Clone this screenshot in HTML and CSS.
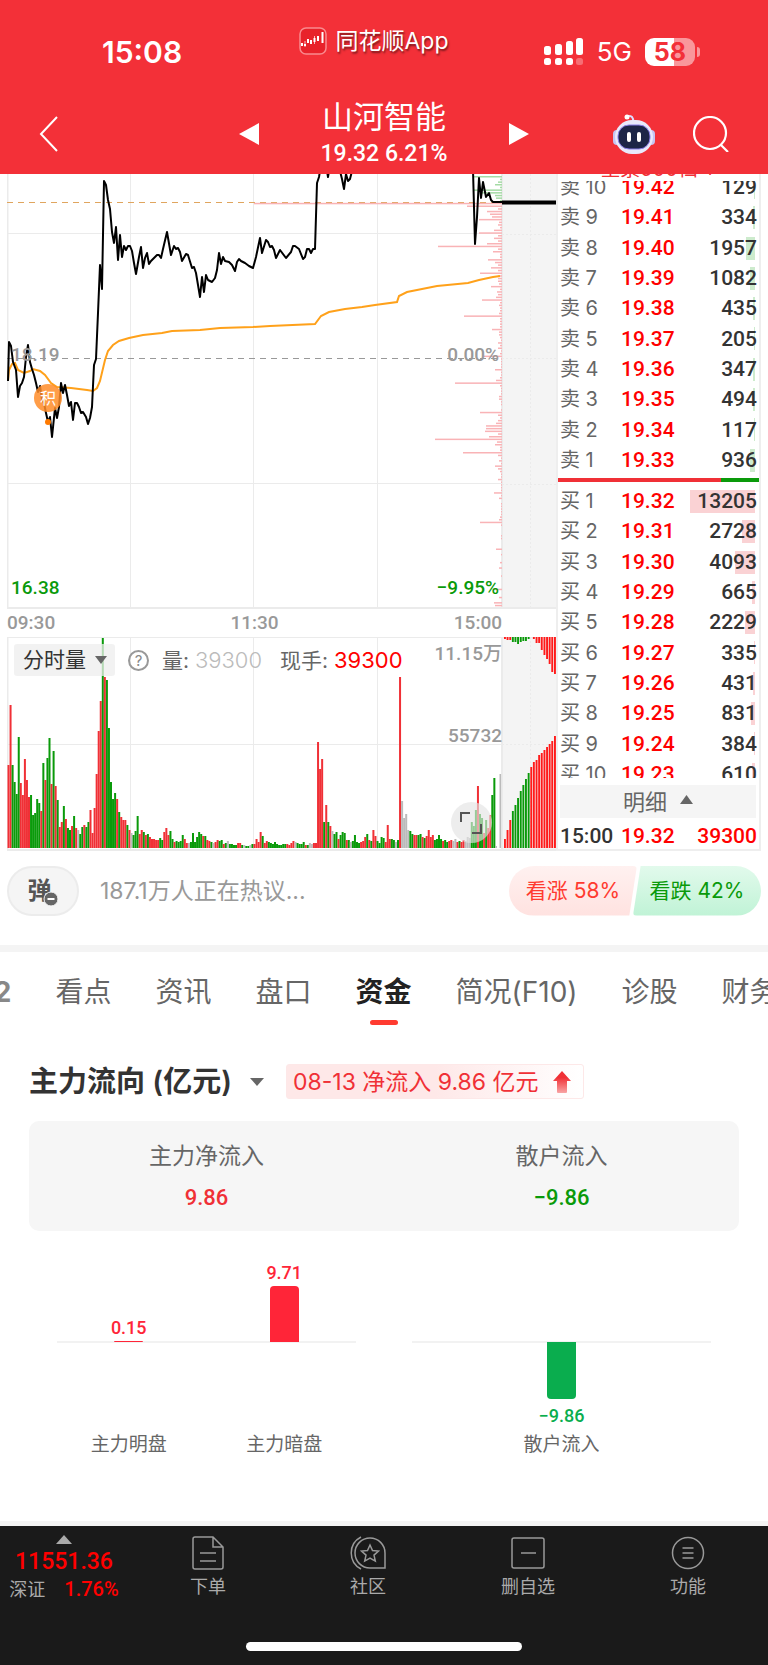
FILE: index.html
```
<!DOCTYPE html>
<html lang="zh-CN">
<head>
    <meta charset="UTF-8">
    <meta name="viewport" content="width=device-width, initial-scale=1">
    <title>山河智能</title>
    <link rel="stylesheet" href="styles.css">
</head>
<body>
    <header class="header">
        <div class="status-bar">
            <div class="status-time">15:08</div>
            <div class="brand">
                <svg width="28" height="28" viewBox="0 0 28 28">
                    <rect x="1" y="1" width="26" height="26" rx="6" fill="#e8222a" stroke="#f98a8e" stroke-width="1.5"/>
                    <path d="M3 16v3M6 17v2M9 12v4M12 13v4M15.500 11v4M19 9v5M23.500 5v11" stroke="#fff" stroke-width="2"/>
                    <path d="M6 14v6M15.500 9v8" stroke="#fff" stroke-width=".7"/>
                </svg>
                <span>同花顺App</span>
            </div>
            <div class="status-right">
                <svg width="40" height="28" viewBox="0 0 40 28" fill="#fff">
                    <rect x="0" y="8" width="7" height="9" rx="2.500"/>
                    <rect x="11" y="6" width="7" height="11" rx="2.500"/>
                    <rect x="22" y="3" width="7" height="14" rx="2.500"/>
                    <rect x="32" y="0" width="7" height="17" rx="2.500"/>
                    <rect x="0" y="20" width="7" height="7" rx="2.500"/>
                    <rect x="11" y="20" width="7" height="7" rx="2.500"/>
                    <rect x="22" y="20" width="7" height="7" rx="2.500"/>
                    <rect x="32" y="20" width="7" height="7" rx="2.500" opacity=".3"/>
                </svg>
                <span class="network">5G</span>
                <span class="battery">58</span>
            </div>
        </div>
        <div class="title-bar">
            <button class="icon-btn" aria-label="返回">
                <svg width="20" height="36" viewBox="0 0 20 36"><path d="M18 1L2 18l16 17" fill="none" stroke="#fff" stroke-width="2"/></svg>
            </button>
            <div class="stock">
                <button class="icon-btn" aria-label="上一只">
                    <svg width="20" height="22" viewBox="0 0 20 22"><path d="M20 0v22L0 11z" fill="#fff"/></svg>
                </button>
                <div class="stock-name">
                    <h1>山河智能</h1>
                    <p>19.32 6.21%</p>
                </div>
                <button class="icon-btn" aria-label="下一只">
                    <svg width="20" height="22" viewBox="0 0 20 22"><path d="M0 0v22l20-11z" fill="#fff"/></svg>
                </button>
            </div>
            <div class="title-actions">
                <button class="icon-btn" aria-label="智能助手">
                    <svg width="44" height="42" viewBox="0 0 44 42">
                        <path d="M15 3q7-1 6 6" fill="none" stroke="#dcdcff" stroke-width="2"/>
                        <circle cx="15" cy="4" r="2.500" fill="#fff"/>
                        <rect x="1" y="17" width="8" height="15" rx="4" fill="#c5c4f2"/>
                        <rect x="35" y="17" width="8" height="15" rx="4" fill="#c5c4f2"/>
                        <rect x="3" y="7" width="38" height="34" rx="17" fill="#e9e9fb"/>
                        <rect x="6" y="12" width="32" height="24" rx="11" fill="#1d2547" stroke="#8b7fe8"/>
                        <path d="M17 21v6M27 21v6" stroke="#fff" stroke-width="4" stroke-linecap="round"/>
                    </svg>
                </button>
                <button class="icon-btn" aria-label="搜索">
                    <svg width="36" height="36" viewBox="0 0 36 36" fill="none" stroke="#fff" stroke-width="2.200"><circle cx="17" cy="17" r="16"/><path d="M28 29l7 7"/></svg>
                </button>
            </div>
        </div>
    </header>

    <main>
        <section class="quote">
            <div class="charts">
                <div class="price-chart">
                    <svg class="plot" viewBox="0 0 549 435" preserveAspectRatio="none">
                        <rect x="495" y="0" width="54" height="434" fill="#f4f4f4"/>
                        <g stroke="#ebebeb" stroke-width="1">
                            <path d="M123.500 0V434M246.500 0V434M370.500 0V434M0 59.500H495M0 309.500H495"/>
                            <path d="M.5 0V434M495 0V434M0 434H549" stroke-width="2"/>
                            <path d="M495 60.500H549M495 184.500H549M495 310.500H549M523.500 0V434" stroke-dasharray="2 2"/>
                        </g>
                        <path d="M0 184.500H495" stroke="#999" stroke-dasharray="6 5"/>
                        <path d="M0 28.500H495" stroke="#e0a55e" stroke-dasharray="6 5"/>
                        <g id="profile"></g>
                        <polyline fill="none" stroke="#ffa11a" stroke-width="2" points="1,207 2,196 5,190 8,189 11,196 17,199 23,197 26,195 33,197 38,201 44,209 50,213 64,214 80,216 86,217 90,214 93,207 98,186 101,177 106,171 112,167 122,164 136,161 155,159 165,157 193,156 213,154 246,153 263,152 308,150 314,142 322,138 338,135 355,133 368,131 390,128 392,122 400,118 415,115 430,112 461,109 472,106 486,103 493,102"/>
                        <polyline fill="none" stroke="#000" stroke-width="2" stroke-linejoin="round" points="1,207 2,168 4,172 6,188 9,196 11,223 13,212 15,209 17,203 19,183 21,171 23,188 25,195 27,201 29,209 31,218 33,212 35,226 37,229 39,239 41,248 43,243 45,263 48,234 50,244 52,233 54,209 56,219 58,211 60,221 62,232 64,228 66,246 68,229 70,229 72,233 74,239 76,238 79,243 81,250 83,244 85,233 87,191 89,185 91,139 93,91 95,115 97,7 99,11 101,26 103,35 105,58 107,69 109,53 111,86 113,61 115,83 117,72 119,76 121,72 123,72 125,77 127,89 129,100 132,83 134,73 136,94 138,84 140,79 142,90 144,87 150,81 152,81 154,84 156,75 160,58 164,81 167,72 169,75 171,74 173,78 175,87 179,80 181,81 185,94 187,93 189,99 191,111 193,123 195,103 197,118 199,101 201,106 205,108 208,104 210,96 212,79 214,90 216,83 218,87 222,88 225,91 228,97 230,88 232,85 234,87 238,89 242,92 246,94 249,83 253,64 255,79 259,66 261,68 263,73 265,72 267,76 269,84 273,76 279,84 284,78 286,72 288,72 292,75 296,85 298,83 300,75 302,75 304,79 306,75 308,75 310,9 312,3 313,-3 320,-3 321,3 322,-3 333,-3 335,5 337,15 339,0 341,7 343,5 345,-3 466,-4 468,70 470,43 472,4 474,24 476,8 479,23 482,19 484,26 486,28 495,28"/>
                        <path d="M495 28.500H549" stroke="#000" stroke-width="4"/>
                    </svg>
                    <span class="tick mid-left">18.19</span>
                    <span class="tick mid-right">0.00%</span>
                    <span class="tick low-left down">16.38</span>
                    <span class="tick low-right down">−9.95%</span>
                    <span class="marker">积</span>
                </div>
                <div class="time-axis">
                    <span>09:30</span>
                    <span>11:30</span>
                    <span>15:00</span>
                </div>
                <div class="volume-chart">
                    <svg class="plot" viewBox="0 0 549 214" preserveAspectRatio="none">
                        <rect x="495" y="0" width="54" height="213" fill="#f4f4f4"/>
                        <g stroke="#ebebeb" stroke-width="1">
                            <path d="M123.500 0V213M246.500 0V213M370.500 0V213M0 .5H549M0 107.500H495"/>
                            <path d="M.5 0V213M495 0V213M0 213H549" stroke-width="2"/>
                            <path d="M495 107.500H549M523.500 0V213" stroke-dasharray="2 2"/>
                        </g>
                        <g id="volume"></g>
                        <g id="auction"></g>
                    </svg>
                    <div class="volume-info">
                        <span class="volume-type">
                            <select aria-label="指标">
                                <option>分时量</option>
                                <option>MACD</option>
                            </select>
                        </span>
                        <button class="help" aria-label="说明">?</button>
                        <span>量: <b class="pale">39300</b></span>
                        <span>现手: <b class="up">39300</b></span>
                    </div>
                    <span class="tick vol-max">11.15万</span>
                    <span class="tick vol-mid">55732</span>
                    <button class="expand" aria-label="全屏">
                        <svg width="22" height="22" viewBox="0 0 22 22" fill="none" stroke="#555" stroke-width="2"><path d="M1 10V1h9M21 12v9h-9"/></svg>
                    </button>
                </div>
            </div>

            <div class="book">
                <div class="book-head"><span>全景500档 +</span></div>
                <div class="book-sell">
                    <table id="sell"></table>
                </div>
                <div class="book-ratio"><i></i></div>
                <div class="book-buy">
                    <table id="buy"></table>
                </div>
                <button class="book-detail">明细
                    <svg width="13" height="9" viewBox="0 0 13 9"><path d="M0 9h13L6.500 0z" fill="#666"/></svg>
                </button>
                <div class="book-last"><span>15:00</span><span class="up">19.32</span><span class="up">39300</span></div>
            </div>
        </section>

        <section class="discuss">
            <button class="danmu" aria-label="弹幕"><span>弹</span>
                <svg width="16" height="16" viewBox="0 0 16 16"><circle cx="8" cy="8" r="7" fill="#666" stroke="#f5f5f5"/><path d="M4.500 8h7" stroke="#fff" stroke-width="2"/></svg>
            </button>
            <input type="text" aria-label="发表评论" placeholder="187.1万人正在热议...">
            <div class="vote">
                <button class="bull">看涨 58%</button>
                <button class="bear">看跌 42%</button>
            </div>
        </section>

        <nav class="tabs">
            <a href="#" class="level">L2</a>
            <a href="#">看点</a>
            <a href="#">资讯</a>
            <a href="#">盘口</a>
            <a href="#" class="active">资金</a>
            <a href="#">简况(F10)</a>
            <a href="#">诊股</a>
            <a href="#">财务</a>
        </nav>

        <section class="fund">
            <div class="fund-title">
                <h2>主力流向 (亿元)</h2>
                <button class="icon-btn" aria-label="切换">
                    <svg width="14" height="8" viewBox="0 0 14 8"><path d="M0 0h14L7 8z" fill="#666"/></svg>
                </button>
                <p class="fund-tag">08-13 净流入 9.86 亿元
                    <svg width="18" height="22" viewBox="0 0 18 22">
                        <defs><linearGradient id="arrow" x2="0" y2="1"><stop offset=".3" stop-color="#f03036"/><stop offset="1" stop-color="#f9a5a5"/></linearGradient></defs>
                        <path d="M9 0l9 10h-4v11q0 1-1 1H5q-1 0-1-1V10H0z" fill="url(#arrow)"/>
                    </svg>
                </p>
            </div>
            <div class="summary">
                <div><h3>主力净流入</h3><p class="red">9.86</p></div>
                <div><h3>散户流入</h3><p class="down">−9.86</p></div>
            </div>
            <div class="bars">
                <div class="bars-half">
                    <div class="bar-col">
                        <div class="positive"><b>0.15</b><i class="bar" style="height: 1px"></i></div>
                        <div class="negative"></div>
                        <span>主力明盘</span>
                    </div>
                    <div class="bar-col">
                        <div class="positive"><b>9.71</b><i class="bar" style="height: 56px"></i></div>
                        <div class="negative"></div>
                        <span>主力暗盘</span>
                    </div>
                </div>
                <div class="bars-half">
                    <div class="bar-col">
                        <div class="positive"></div>
                        <div class="negative"><i class="bar" style="height: 57px"></i><b>−9.86</b></div>
                        <span>散户流入</span>
                    </div>
                </div>
            </div>
        </section>
    </main>

    <footer class="bottom">
        <div class="bottom-bar">
            <a href="#" class="index">
                <svg width="16" height="9" viewBox="0 0 16 9"><path d="M0 9h16L8 0z" fill="#aaa"/></svg>
                <strong>11551.36</strong>
                <span>深证 <b>1.76%</b></span>
            </a>
            <a href="#">
                <svg width="36" height="36" viewBox="0 0 36 36"><path d="M3 4q0-2 2-2h18l10 10v20q0 2-2 2H5q-2 0-2-2zM23 2v10h10M10 18h16M10 26h16"/></svg>
                下单
            </a>
            <a href="#">
                <svg width="36" height="36" viewBox="0 0 36 36"><path d="M35 33H20A15 15 0 1 1 35 18zM11 2a18 18 0 0 0 0 32M20 10l2.500 5.500 6 .6-4.500 4 1.300 6L20 23l-5.300 3.100 1.300-6-4.500-4 6-.6z"/></svg>
                社区
            </a>
            <a href="#">
                <svg width="36" height="36" viewBox="0 0 36 36"><path d="M4 3h28q2 0 2 2v26q0 2-2 2H4q-2 0-2-2V5q0-2 2-2zM11 18h15"/></svg>
                删自选
            </a>
            <a href="#">
                <svg width="36" height="36" viewBox="0 0 36 36"><circle cx="18" cy="18" r="15.500"/><path d="M12.500 13h11M12.500 18h11M12.500 23h11"/></svg>
                功能
            </a>
        </div>
        <div class="home-indicator"></div>
    </footer>

    <script src="chart.js"></script>
</body>
</html>
```

FILE: styles.css
```
* {
    box-sizing: border-box;
}

body {
    margin: 0;
    font-family: Inter, "Noto Sans CJK SC", sans-serif;
    font-size: 20px;
    line-height: 28px;
    color: #333;
    background-color: #fff;
}

h1, h2, h3, p {
    margin: 0;
    font-weight: normal;
}

a {
    color: inherit;
    text-decoration: none;
}

button, input, select {
    font: inherit;
    color: inherit;
    border: none;
    padding: 0;
    margin: 0;
    background: none;
}

svg {
    display: block;
}

.icon-btn {
    display: flex;
    cursor: pointer;
}

.up {
    color: #ff0000;
}

.red {
    color: #f03036;
}

.down {
    color: #0a9a0a;
}

/* header */
.header {
    background-color: #f33038;
    color: #fff;
    padding: 24px 39px 0 39px;
}

.status-bar {
    display: grid;
    grid-template-columns: 1fr auto 1fr;
    height: 70px;
}

.status-time {
    padding: 12px 0 0 63px;
    font-size: 30px;
    line-height: 32px;
    font-weight: 600;
}

.brand {
    display: flex;
    gap: 8px;
    height: 34px;
    padding-right: 20px;
    align-items: center;
    font-size: 23px;
    text-shadow: 1px 2px 2px rgba(0, 0, 0, .5);
}

.status-right {
    display: flex;
    justify-content: flex-end;
    align-items: center;
    height: 56px;
    gap: 13px;
    padding-right: 34px;
}

.network {
    font-size: 26px;
}

.battery {
    position: relative;
    width: 50px;
    height: 28px;
    border-radius: 9px;
    background: linear-gradient(to right, #fff 58%, #f9979b 58%);
    color: #f33038;
    font-size: 25px;
    font-weight: 700;
    text-align: center;
}

.battery::after {
    content: "";
    position: absolute;
    right: -5px;
    top: 9px;
    width: 3px;
    height: 10px;
    border-radius: 0 3px 3px 0;
    background-color: #f9979b;
}

.title-bar {
    display: grid;
    grid-template-columns: 1fr 290px 1fr;
    align-items: center;
    height: 80px;
}

.stock {
    display: flex;
    justify-content: space-between;
    align-items: center;
}

.stock-name {
    text-align: center;
}

.stock-name h1 {
    font-size: 31px;
    line-height: 40px;
}

.stock-name p {
    font-family: Roboto, sans-serif;
    font-size: 23px;
    line-height: 34px;
    font-weight: 500;
}

.title-actions {
    display: flex;
    justify-content: flex-end;
    align-items: center;
    gap: 37px;
}

/* charts */
.quote {
    display: flex;
    height: 677px;
    padding: 0 7px;
}

.charts {
    flex: 1;
    min-width: 0;
}

.plot {
    width: 100%;
    height: 100%;
}

.price-chart {
    position: relative;
    height: 435px;
}

.tick {
    position: absolute;
    font-family: Roboto, "Noto Sans CJK SC", sans-serif;
    font-size: 19px;
    line-height: 24px;
    font-weight: 500;
    color: #999;
}

.tick.down {
    color: #0a9a0a;
}

.mid-left {
    left: 4px;
    top: 169px;
}

.mid-right {
    right: 57px;
    top: 169px;
}

.low-left {
    left: 4px;
    top: 402px;
}

.low-right {
    right: 57px;
    top: 402px;
}

.vol-max {
    right: 54px;
    top: 5px;
}

.vol-mid {
    right: 54px;
    top: 87px;
}

.marker {
    position: absolute;
    left: 27px;
    top: 210px;
    width: 28px;
    height: 28px;
    border-radius: 50%;
    background-color: rgba(255, 140, 40, .85);
    color: #fff;
    font-size: 16px;
    text-align: center;
}

.marker::after {
    content: "";
    position: absolute;
    left: 11px;
    top: 35px;
    width: 6px;
    height: 6px;
    border-radius: 50%;
    background-color: #ff7a00;
}

.time-axis {
    display: flex;
    justify-content: space-between;
    height: 28px;
    padding-right: 54px;
    font-family: Roboto, sans-serif;
    font-size: 19px;
    font-weight: 500;
    color: #999;
}

.volume-chart {
    position: relative;
    height: 214px;
}

.volume-info {
    position: absolute;
    left: 7px;
    top: 7px;
    display: flex;
    align-items: center;
    height: 32px;
    font-size: 21px;
    color: #666;
    white-space: nowrap;
}

.volume-info b {
    font-size: 22px;
    font-weight: 400;
}

.volume-info > span + span {
    margin-left: 18px;
}

.volume-info .pale {
    color: #bbb;
    font-weight: 300;
}

.volume-type {
    position: relative;
    height: 32px;
    border-radius: 3px;
    background-color: rgba(238, 238, 238, .75);
}

.volume-type::after {
    content: "";
    position: absolute;
    right: 8px;
    top: 12px;
    border: 6px solid transparent;
    border-top: 8px solid #666;
    border-bottom: none;
}

.volume-type select {
    appearance: none;
    width: 101px;
    height: 32px;
    padding-left: 9px;
    color: #333;
}

.help {
    width: 21px;
    height: 21px;
    margin: 0 13px;
    border: 2px solid #999;
    border-radius: 50%;
    font-size: 15px;
    line-height: 17px;
    color: #888;
}

.expand {
    position: absolute;
    right: 64px;
    bottom: 8px;
    width: 41px;
    height: 41px;
    padding: 9px;
    border-radius: 50%;
    background-color: rgba(228, 228, 228, .65);
}

/* order book */
.book {
    width: 205px;
    border: 2px solid #eee;
    border-top: none;
    font-family: Roboto, sans-serif;
}

.book-head {
    display: flex;
    align-items: flex-end;
    justify-content: center;
    height: 7px;
    overflow: hidden;
    color: #f03036;
    font-family: Inter, "Noto Sans CJK SC", sans-serif;
    line-height: 24px;
    white-space: nowrap;
}

.book-sell {
    display: flex;
    align-items: flex-end;
    height: 294px;
    overflow: hidden;
}

.book-buy {
    height: 292px;
    margin-top: 4px;
    overflow: hidden;
}

.book table {
    width: 100%;
    height: 303px;
    border-collapse: collapse;
    table-layout: fixed;
}

.book th, .book td {
    padding: 0;
    text-align: left;
    line-height: 30px;
    white-space: nowrap;
}

.book th {
    width: 63px;
    padding-left: 2px;
    color: #666;
    font-family: Inter, "Noto Sans CJK SC", sans-serif;
    font-weight: 400;
    font-size: 20px;
}

.book td {
    font-size: 21px;
    font-weight: 500;
}

.book .price {
    width: 54px;
    color: #ff0000;
}

.book .amount {
    position: relative;
    text-align: right;
    padding-right: 2px;
}

.amount i {
    position: absolute;
    right: 4px;
    top: 4px;
    height: 23px;
    background-color: #cdebcd;
}

.book-buy .amount i {
    background-color: #fad2d4;
}

.amount span {
    position: relative;
}

.book-ratio {
    height: 4px;
    margin: 3px 0 0;
    background-color: #0a9a0a;
}

.book-ratio i {
    display: block;
    width: 81%;
    height: 4px;
    background-color: #f03036;
}

.book-detail {
    display: flex;
    align-items: center;
    justify-content: center;
    gap: 13px;
    width: 196px;
    height: 33px;
    margin: 7px 2px 0;
    padding-bottom: 4px;
    background-color: #f5f5f5;
    color: #666;
    font-family: "Noto Sans CJK SC", sans-serif;
    font-size: 22px;
}

.book-last {
    display: grid;
    grid-template-columns: 61px 1fr auto;
    padding: 4px 2px 0;
    font-size: 21px;
    font-weight: 500;
}

/* discuss */
.discuss {
    display: flex;
    align-items: center;
    height: 101px;
    padding: 0 7px 15px;
    border-bottom: 7px solid #f4f4f4;
}

.danmu {
    display: flex;
    align-items: center;
    justify-content: center;
    width: 72px;
    height: 50px;
    border: 2px solid #ececec;
    border-radius: 25px;
    background-color: #f5f5f5;
    color: #555;
    font-size: 24px;
    font-weight: 700;
}

.danmu svg {
    margin: 16px 0 0 -9px;
}

.discuss input {
    flex: 1;
    min-width: 0;
    margin-left: 21px;
    font-size: 23px;
}

.discuss input::placeholder {
    color: #999;
    opacity: 1;
}

.vote {
    display: flex;
    font-size: 21px;
}

.vote button {
    width: 128px;
    height: 50px;
}

.vote .bull {
    border-radius: 25px 4px 4px 25px;
    background: linear-gradient(#fff1f0, #ffe2e0);
    color: #ff3b30;
    clip-path: polygon(0 0, 100% 0, 94% 100%, 0 100%);
}

.vote .bear {
    margin-left: -4px;
    border-radius: 4px 25px 25px 4px;
    background: linear-gradient(#e2faec, #c0f3d6);
    color: #0a9a0a;
    clip-path: polygon(6% 0, 100% 0, 100% 100%, 0 100%);
}

/* tabs */
.tabs {
    display: flex;
    gap: 44px;
    height: 88px;
    margin-left: -22px;
    overflow: hidden;
    font-size: 28px;
    line-height: 80px;
    color: #666;
    white-space: nowrap;
}

.tabs .level {
    width: 36px;
    color: #888;
    font-weight: 700;
}

.tabs .active {
    position: relative;
    color: #222;
    font-weight: 700;
}

.tabs .active::after {
    content: "";
    position: absolute;
    left: 14px;
    top: 68px;
    width: 28px;
    height: 5px;
    border-radius: 3px;
    background-color: #ff3b30;
}

/* fund */
.fund {
    padding: 24px 29px 62px;
    border-bottom: 5px solid #f4f4f4;
}

.fund-title {
    display: flex;
    align-items: center;
    height: 35px;
    white-space: nowrap;
}

.fund-title h2 {
    margin-right: 18px;
    font-size: 29px;
    font-weight: 600;
}

.fund-tag {
    display: flex;
    align-items: center;
    gap: 14px;
    height: 35px;
    margin-left: 22px;
    padding: 0 12px 0 6px;
    border: 1px solid #fde8e8;
    border-radius: 3px;
    background: linear-gradient(to right, #fee8e8 50%, #fff);
    color: #f03036;
    font-size: 23px;
}

.summary {
    display: grid;
    grid-template-columns: 1fr 1fr;
    height: 110px;
    margin-top: 22px;
    padding-top: 21px;
    border-radius: 10px;
    background-color: #f6f6f6;
    text-align: center;
}

.summary h3 {
    height: 40px;
    font-size: 23px;
    color: #666;
}

.summary p {
    font-family: Roboto, sans-serif;
    font-size: 22px;
    line-height: 32px;
    font-weight: 500;
}

.bars {
    display: grid;
    grid-template-columns: 1fr 1fr;
    margin-top: 19px;
}

.bars-half {
    position: relative;
    display: flex;
    padding: 0 22px;
}

.bars-half::before {
    content: "";
    position: absolute;
    left: 28px;
    right: 28px;
    top: 91px;
    height: 2px;
    background-color: #f2f2f2;
}

.bar-col {
    position: relative;
    flex: 1;
    text-align: center;
    font-size: 19px;
    color: #666;
}

.positive, .negative {
    display: flex;
    flex-direction: column;
    align-items: center;
    height: 92px;
    color: #ff2538;
    font-family: Roboto, sans-serif;
}

.positive {
    justify-content: flex-end;
}

.negative {
    height: 89px;
    color: #0aad4e;
}

.bar-col b {
    font-size: 18px;
    font-weight: 500;
    line-height: 26px;
}

.bar {
    width: 29px;
    border-radius: 4px 4px 0 0;
    background-color: #ff2538;
}

.negative .bar {
    margin-bottom: 4px;
    border-radius: 0 0 4px 4px;
    background-color: #0aad4e;
}

/* bottom */
.bottom {
    height: 140px;
    padding-top: 9px;
    background-color: #1a1a1a;
    color: #aaa;
}

.bottom-bar {
    display: flex;
    height: 107px;
    font-size: 18px;
}

.bottom-bar a {
    flex: 1;
    display: flex;
    flex-direction: column;
    align-items: center;
    line-height: 32px;
}

.bottom-bar a > svg {
    fill: none;
    stroke: #999;
    stroke-width: 1.500;
}

.bottom-bar .index {
    flex: none;
    width: 128px;
    line-height: 26px;
}

.bottom-bar .index > svg {
    stroke: none;
}

.index strong, .index b {
    font-family: Roboto, sans-serif;
    font-weight: 500;
    color: #ff0000;
}

.index strong {
    margin-top: 4px;
    font-size: 23px;
    line-height: 28px;
}

.index b {
    margin-left: 14px;
    font-size: 20px;
}

.home-indicator {
    width: 36%;
    height: 9px;
    margin: 0 auto;
    border-radius: 5px;
    background-color: #fff;
}
```

FILE: chart.js
```
var RED = "#f03036";
var GREEN = "#0a9a0a";
var colors = { r: RED, g: GREEN, x: "#bbb" };

function addRect(parent, x, y, w, h, fill) {
    var rect = document.createElementNS("http://www.w3.org/2000/svg", "rect");
    rect.setAttribute("x", x);
    rect.setAttribute("y", y);
    rect.setAttribute("width", w);
    rect.setAttribute("height", h);
    rect.setAttribute("fill", fill);
    parent.appendChild(rect);
}

// 分价量: index is the price level, value the bar length
var profile = [28, 2, 4, 7, 2, 28, 20, 7, 6, 2, 248, 35, 4, 15, 12, 10, 23, 3, 4, 2, 8, 23, 4, 8, 4, 15, 64, 4, 9, 2,
    2, 14, 7, 4, 11, 4, 22, 4, 4, 4, 3, 11, 2, 5, 4, 6, 20, 2, 3, 2, 2, 3, 38, 2, 2, 2, 2, 10, 3, 3,
    2, 1, 4, 2, 4, 1, 2, 18, 1, 1, 1, 1, 7, 1, 1, 2, 6, 47, 2, 1, 1, 1, 3, 3, 1, 1, 0, 1, 22, 4,
    2, 4, 6, 16, 16, 17, 4, 13, 67, 5, 7, 2, 2, 39, 4, 1, 3, 1, 7, 4, 2, 1, 1, 4, 1, 1, 1, 1, 8, 1,
    3, 0, 1, 1, 1, 1, 1, 2, 3, 22, 1, 0, 0, 0, 1, 1, 0, 0, 0, 6, 0, 1, 0, 0, 2, 0, 3, 0, 0, 1,
    0, 0, 0, 0, 8, 0, 0, 3, 0, 8, 7];

var profileGroup = document.getElementById("profile");
profile.forEach(function (len, i) {
    if (len) {
        addRect(profileGroup, 495 - len, (2 + i * 2.68).toFixed(1), len, 1.5, i < 10 ? "#a5dba5" : "#f9b3b6");
    }
});

var volume = ("r83 r143 g83 g66 g54 g111 r65 r53 r89 r68 r51 g53 g33 g35 g49 g45 r37 g85 r68 g90 g110 r64 g97 r62 g48 r21 r26 g42 r29 g20 " +
    "g18 r22 g32 r20 x18 g14 g21 r23 g21 g26 r38 r15 r40 r74 r117 r147 g210 r171 g168 g120 g66 g49 g55 r49 g36 r31 r28 r28 g23 r18 " +
    "x15 g13 g17 g32 r14 r18 g16 r13 g14 r11 r9 r9 r8 r8 g10 g8 r16 r20 r13 g17 g9 r6 g7 g6 g7 g13 r9 r5 x5 g6 " +
    "g15 g6 g11 g16 g14 r12 g12 r8 r7 g6 x5 r6 r8 g7 g8 r4 g5 x7 g4 g4 g3 g3 r5 r5 g3 x3 g2 g2 x3 g4 " +
    "r4 r9 r6 r16 g12 r5 r7 g6 g5 g4 g6 g4 g3 g3 g4 g4 r4 r3 r5 r7 x6 g5 g4 g4 g6 r3 g3 x5 x4 r5 " +
    "r5 r106 r79 r89 g26 r43 g26 r22 x17 g14 g16 r9 g13 g16 g15 r8 g8 x6 g7 g13 g6 g5 r6 r7 r11 g14 r8 g7 r18 r12 " +
    "g7 g5 g11 g10 r6 r23 r9 g9 g8 x6 g8 r171 x47 x30 x34 x18 g17 g14 r13 r13 g13 g14 r11 g10 r12 r18 r11 r13 g8 g9 " +
    "g13 g9 r7 g8 g6 r7 r8 x7 x9 r6 g7 r6 r8 x7 x11 x10 g26 g22 g38 r62 g34 g30 r15 g28 r20 r33 g53 g70 x2 x0 x74").split(" ");

var volumeGroup = document.getElementById("volume");
volume.forEach(function (item, i) {
    var h = Number(item.slice(1));
    addRect(volumeGroup, (0.5 + i * 2.05).toFixed(2), 211 - h, i > 237 ? 1.6 : 2, h, colors[item[0]]);
});

// 集合竞价
var auction = "r9 r18 r28 g37 g43 g50 g57 g63 g69 g75 r81 r86 r88 r93 r95 r98 r101 r104 r107 r112".split(" ");
var unmatched = "r2 r3 r3 g5 g5 g7 g5 g4 g4 g2 r0 r2 r6 r6 r13 r18 r22 r27 r35 r37".split(" ");
var auctionGroup = document.getElementById("auction");

function drawAuction(list, fromTop) {
    list.forEach(function (item, i) {
        var h = Number(item.slice(1));
        addRect(auctionGroup, (497 + i * 2.63).toFixed(1), fromTop ? 0 : 211 - h, 1.9, h, item[0] === "r" ? "#ff1a1a" : GREEN);
    });
}

drawAuction(auction, false);
drawAuction(unmatched, true);

// 买卖盘: 数量, 柱宽
var sell = [[129, 1], [334, 2], [1957, 9], [1082, 5], [435, 2], [205, 1], [347, 2], [494, 2], [117, 1], [936, 5]];
var buy = [[13205, 65], [2728, 13], [4093, 20], [665, 3], [2229, 10], [335, 1], [431, 2], [831, 4], [384, 1], [610, 3]];

function fillBook(id, label, rows, firstPrice, firstLevel, step) {
    var table = document.getElementById(id);
    rows.forEach(function (row, i) {
        var tr = table.insertRow();
        tr.innerHTML = "<th scope='row'>" + label + " " + (firstLevel + step * i) + "</th>" +
            "<td class='price'>" + (firstPrice - i / 100).toFixed(2) + "</td>" +
            "<td class='amount'><i style='width: " + row[1] + "px'></i><span>" + row[0] + "</span></td>";
    });
}

fillBook("sell", "卖", sell, 19.42, 10, -1);
fillBook("buy", "买", buy, 19.32, 1, 1);
```
